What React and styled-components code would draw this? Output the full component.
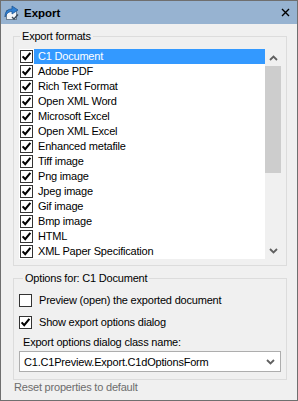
import React from 'react';
import styled, { createGlobalStyle } from 'styled-components';

const GlobalStyle = createGlobalStyle`
  html, body { margin: 0; padding: 0; background: #ffffff; }
  body {
    font-family: "Liberation Sans", Arial, sans-serif;
    font-size: 11px;
    letter-spacing: -0.2px;
    color: #000;
  }
  * { box-sizing: border-box; }
`;

const Window = styled.div`
  width: 298px;
  height: 401px;
  border: 1px solid #6f6f6f;
  background: #f0f0f0;
  display: flex;
  flex-direction: column;
`;

const TitleBar = styled.div`
  height: 23px;
  flex: none;
  background: #97b3d1;
  display: flex;
  align-items: center;
  padding: 0 7px 0 2px;
`;

const Title = styled.div`
  flex: 1;
  margin-left: 4px;
  font-weight: bold;
  font-size: 11.5px;
  letter-spacing: 0;
`;

const Body = styled.div`
  flex: 1;
  display: flex;
  flex-direction: column;
  padding: 6px 10px 0 12px;
`;

const Group = styled.fieldset`
  margin: ${(p) => p.$top || 0}px 0 0 0;
  padding: 0 5px ${(p) => p.$bottom}px 5px;
  border: 1px solid #dcdcdc;
  min-width: 0;
`;

const Legend = styled.legend`
  margin-left: ${(p) => p.$indent}px;
  padding: 0 2px;
  line-height: 13px;
`;

const ListBox = styled.div`
  margin-top: 6px;
  height: 210px;
  display: flex;
  background: #fff;
`;

const Items = styled.div`
  flex: 1;
  display: flex;
  flex-direction: column;
`;

const Row = styled.div`
  height: 15px;
  display: flex;
  align-items: center;
  padding-left: 1px;
`;

const ItemText = styled.div`
  flex: 1;
  height: 15px;
  margin-left: 1px;
  padding-left: 4px;
  line-height: 15px;
  white-space: nowrap;
  background: ${(p) => (p.$selected ? '#3399ff' : 'transparent')};
  color: ${(p) => (p.$selected ? '#fff' : '#000')};
`;

const ScrollBar = styled.div`
  width: 16px;
  background: #f0f0f0;
  display: flex;
  flex-direction: column;
`;

const ScrollButton = styled.div`
  height: 17px;
  display: flex;
  align-items: center;
  justify-content: center;
`;

const Track = styled.div`
  flex: 1;
  display: flex;
  flex-direction: column;
`;

const Thumb = styled.div`
  height: 107px;
  background: #cdcdcd;
`;

const Box = styled.span`
  width: 13px;
  height: 13px;
  flex: none;
  border: 1px solid #333;
  background: #fff;
  display: inline-flex;
  align-items: center;
  justify-content: center;
`;

const OptionRow = styled.div`
  height: 22px;
  display: flex;
  align-items: center;
  gap: 7px;
`;

const Options = styled.div`
  padding-top: 4px;
  display: flex;
  flex-direction: column;
`;

const FieldLabel = styled.div`
  margin-top: 2px;
  padding-left: 4px;
  line-height: 14px;
`;

const Combo = styled.div`
  margin-top: 2px;
  height: 21px;
  border: 1px solid #adadad;
  background: #fff;
  display: flex;
  align-items: center;
  padding: 0 5px 0 4px;
`;

const ComboText = styled.div`
  flex: 1;
  white-space: nowrap;
`;

const Footer = styled.div`
  padding-left: 1px;
  line-height: 14px;
  color: #6d6d6d;
`;

const CheckBox = ({ checked }) => (
  <Box>
    {checked && (
      <svg width="11" height="11" viewBox="0 0 11 11">
        <path d="M1.6 5.4 L4.2 8.2 L9.4 1.8" fill="none" stroke="#000" strokeWidth="2.1" />
      </svg>
    )}
  </Box>
);

const Chevron = ({ up }) => (
  <svg width="9" height="6" viewBox="0 0 9 6">
    <path
      d={up ? 'M1 5 L4.5 1.5 L8 5' : 'M1 1 L4.5 4.5 L8 1'}
      fill="none"
      stroke="#606060"
      strokeWidth="1.8"
    />
  </svg>
);

const ExportIcon = () => (
  <svg width="17" height="17" viewBox="0 0 17 17">
    <rect x="3.5" y="6.5" width="10" height="9" fill="#f3f5f8" stroke="#6d7f92" />
    <path d="M2 13 C2 7 5 5 9 5 L9 2 L15 6 L9 10 L9 7.5 C6 7.5 4 9 2 13 Z" fill="#2f7fd1" stroke="#1d5596" strokeWidth="0.8" />
    <path d="M9 13 L11 15 L15 10.5" fill="none" stroke="#3a4a5a" strokeWidth="1.4" />
  </svg>
);

const formats = [
  'C1 Document',
  'Adobe PDF',
  'Rich Text Format',
  'Open XML Word',
  'Microsoft Excel',
  'Open XML Excel',
  'Enhanced metafile',
  'Tiff image',
  'Png image',
  'Jpeg image',
  'Gif image',
  'Bmp image',
  'HTML',
  'XML Paper Specification',
];

export default function App() {
  return (
    <>
      <GlobalStyle />
      <Window>
        <TitleBar>
          <ExportIcon />
          <Title>Export</Title>
          <svg width="9" height="9" viewBox="0 0 9 9">
            <path d="M1 1 L8 8 M8 1 L1 8" stroke="#000" strokeWidth="1.4" />
          </svg>
        </TitleBar>
        <Body>
          <Group $bottom={6}>
            <Legend $indent={1}>Export formats</Legend>
            <ListBox>
              <Items>
                {formats.map((name, i) => (
                  <Row key={name}>
                    <CheckBox checked />
                    <ItemText $selected={i === 0}>{name}</ItemText>
                  </Row>
                ))}
              </Items>
              <ScrollBar>
                <ScrollButton>
                  <Chevron up />
                </ScrollButton>
                <Track>
                  <Thumb />
                </Track>
                <ScrollButton>
                  <Chevron />
                </ScrollButton>
              </ScrollBar>
            </ListBox>
          </Group>
          <Group $top={6} $bottom={7}>
            <Legend $indent={4}>Options for: C1 Document</Legend>
            <Options>
              <OptionRow>
                <CheckBox />
                <span>Preview (open) the exported document</span>
              </OptionRow>
              <OptionRow>
                <CheckBox checked />
                <span>Show export options dialog</span>
              </OptionRow>
              <FieldLabel>Export options dialog class name:</FieldLabel>
              <Combo>
                <ComboText>C1.C1Preview.Export.C1dOptionsForm</ComboText>
                <Chevron />
              </Combo>
            </Options>
          </Group>
          <Footer>Reset properties to default</Footer>
        </Body>
      </Window>
    </>
  );
}
